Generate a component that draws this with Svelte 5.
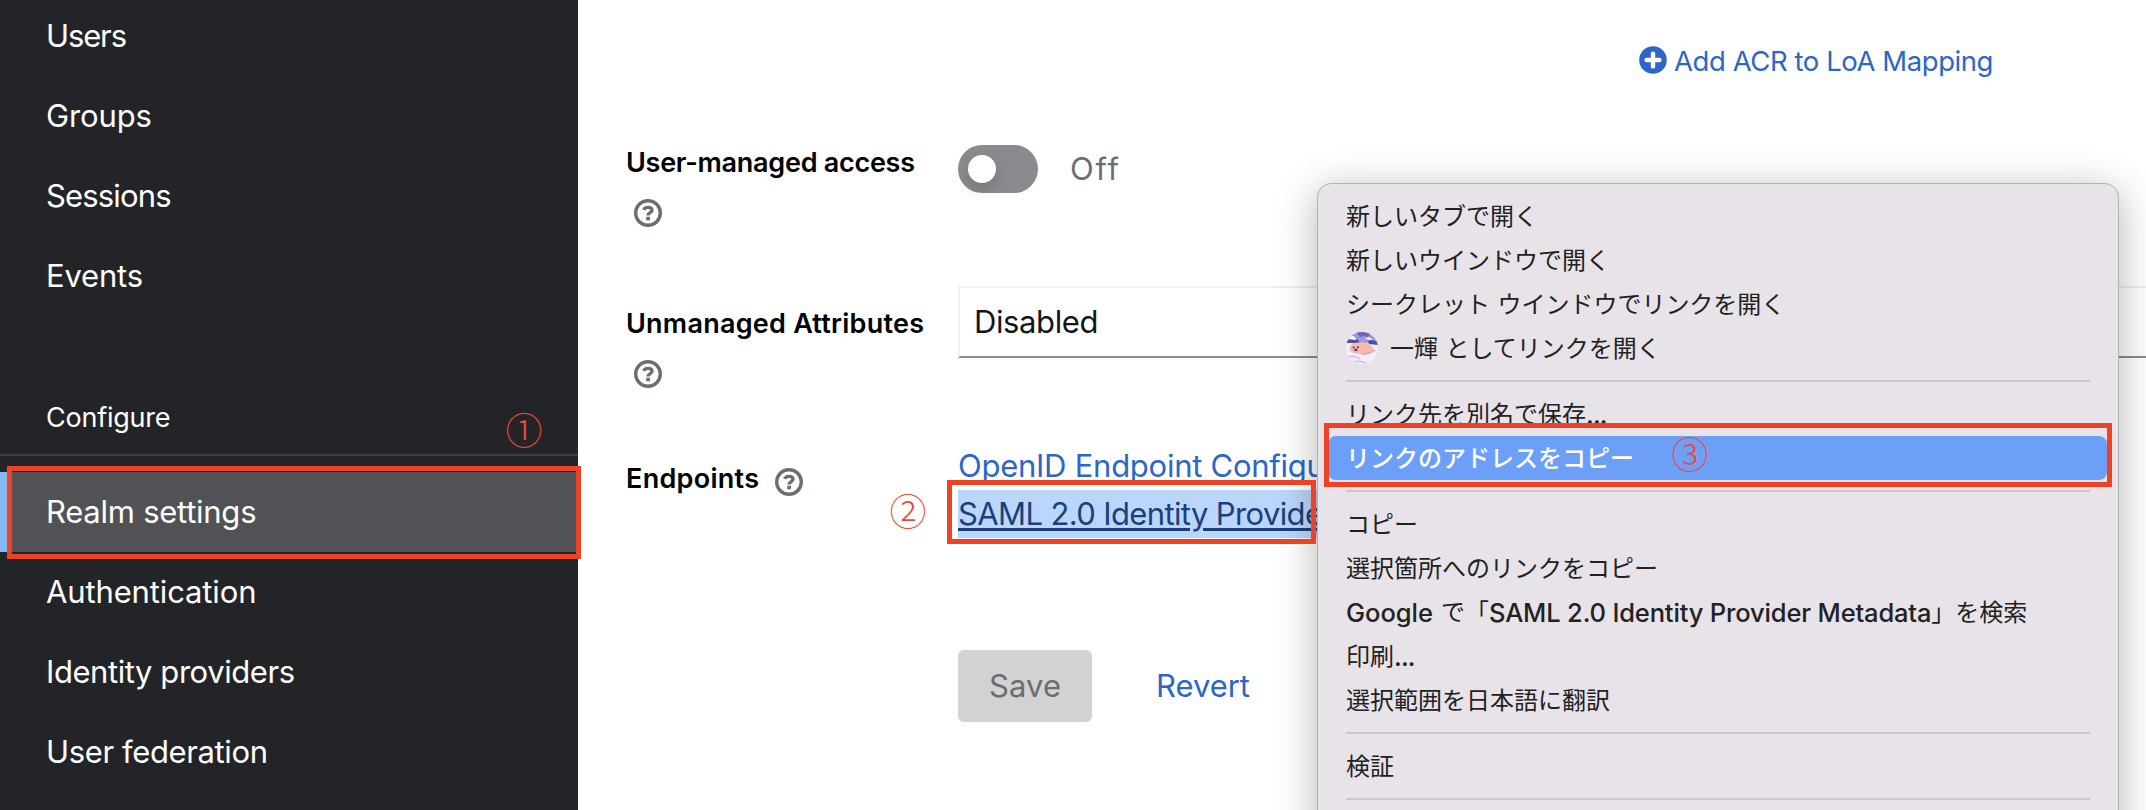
<script>
  const mainNav = [
    { label: 'Users', width: 81 },
    { label: 'Groups', width: 106 },
    { label: 'Sessions', width: 125.5 },
    { label: 'Events', width: 97 }
  ];
  const configNav = [
    { label: 'Realm settings', width: 210.5, active: true },
    { label: 'Authentication', width: 210.5 },
    { label: 'Identity providers', width: 249 },
    { label: 'User federation', width: 222 }
  ];
  const menu = [
    [
      { label: '新しいタブで開く' },
      { label: '新しいウインドウで開く' },
      { label: 'シークレット ウインドウでリンクを開く' },
      { label: '一輝 としてリンクを開く', avatar: true }
    ],
    [
      { label: 'リンク先を別名で保存', dots: true },
      { label: 'リンクのアドレスをコピー', selected: true }
    ],
    [
      { label: 'コピー' },
      { label: '選択箇所へのリンクをコピー' },
      { search: true },
      { label: '印刷', dots: true },
      { label: '選択範囲を日本語に翻訳' }
    ],
    [{ label: '検証' }]
  ];

  // Tracks a label so that its text spans the given width in pixels.
  function track(node, width) {
    const natural = node.getBoundingClientRect().width;
    const gaps = node.textContent.length - 1;
    node.style.letterSpacing = `${(width - natural) / gaps}px`;
  }
</script>

{#snippet help()}
  <svg class="help" viewBox="0 0 28 28" aria-hidden="true">
    <circle cx="14" cy="14" r="12.3" fill="none" stroke="currentColor" stroke-width="3.4" />
    <path d="M9.7 10.9C10.4 9.2 11.9 8.4 14 8.4c2.5 0 4 1.1 4 2.9 0 2.7-4 2.5-4 5.1" fill="none" stroke="currentColor" stroke-width="3.4" />
    <rect x="12.2" y="17.8" width="3.8" height="3.5" fill="currentColor" />
  </svg>
{/snippet}

<div class="page">
  <nav class="sidebar">
    {#each mainNav as item}
      <a class="nav-item"><span use:track={item.width}>{item.label}</span></a>
    {/each}
    <h2 class="nav-title"><span use:track={124.5}>Configure</span></h2>
    {#each configNav as item}
      <a class="nav-item" class:active={item.active}><span use:track={item.width}>{item.label}</span></a>
    {/each}
  </nav>

  <main>
    <div class="add">
      <svg viewBox="0 0 28 28" width="28" height="28" aria-hidden="true">
        <circle cx="14" cy="14" r="13.8" fill="#2b66c8" />
        <path d="M14 7.6v12.8M7.6 14h12.8" stroke="#fff" stroke-width="4.4" stroke-linecap="round" />
      </svg>
      <span use:track={319.5}>Add ACR to LoA Mapping</span>
    </div>

    <div class="field access">
      <div class="label"><span use:track={289}>User-managed access</span>{@render help()}</div>
      <div class="control">
        <span class="switch"><span class="knob"></span></span>
        <span class="off" use:track={49}>Off</span>
      </div>
    </div>

    <div class="field attributes">
      <div class="label"><span use:track={298}>Unmanaged Attributes</span>{@render help()}</div>
      <div class="select"><span use:track={124.5}>Disabled</span></div>
    </div>

    <div class="field endpoints">
      <div class="label"><span use:track={133}>Endpoints</span>{@render help()}</div>
      <div class="links">
        <a><span use:track={449}>OpenID Endpoint Configuration</span></a>
        <a class="picked"><span use:track={517}>SAML 2.0 Identity Provider Metadata</span></a>
      </div>
    </div>

    <div class="actions">
      <button class="save"><span use:track={72}>Save</span></button>
      <button class="revert"><span use:track={94}>Revert</span></button>
    </div>
  </main>

  <div class="menu">
    {#each menu as group}
      <div class="group">
        {#each group as item}
          <div class="row" class:selected={item.selected}>
            {#if item.avatar}
              <svg class="avatar" viewBox="0 0 32 32" aria-hidden="true">
                <defs>
                  <clipPath id="round"><circle cx="16" cy="16" r="16" /></clipPath>
                </defs>
                <g clip-path="url(#round)">
                  <rect width="32" height="32" fill="#f1edfb" />
                  <path d="M0 0h32v11H0z" fill="#9d95e0" />
                  <path d="M10 0l4 5 4-1 4 1 3-5z" fill="#6a66bd" />
                  <path d="M0 8l5-2 6 1 3 4H0zM22 9l4-1 6 2v3l-9-1z" fill="#4f4d9e" />
                  <path d="M1 7q4-5 8-2 2 2 1 3zM19 7q4-4 8 1z" fill="#fff" />
                  <path d="M4 18C3 13 7 10 13 10.5c6-1 12 1 14 6 3 1 3 4 1 4l-8 .5q-3 3-5 .8C9 21.800 5 21 4 18z" fill="#f4b9b0" />
                  <path d="M14 21.500q4 .6 8-1l4-1q-3 4-10 3z" fill="#e89b93" />
                  <circle cx="7.600" cy="15.400" r="0.900" fill="#3d2b35" />
                  <circle cx="12" cy="15.200" r="0.900" fill="#3d2b35" />
                  <path d="M8.400 16.800h3v2.200h-3z" fill="#5b3f48" />
                  <path d="M2 25q7-2 12 2M8 30q6-2 12 1" fill="none" stroke="#cdbff2" stroke-width="1.500" />
                </g>
              </svg>
            {/if}
            {#if item.search}
              <span class="latin google" use:track={87}>Google</span><span class="text">で「</span><span class="latin" use:track={442.5}>SAML 2.0 Identity Provider Metadata</span><span class="text">」を検索</span>
            {:else}
              <span class="text">{item.label}</span>{#if item.dots}<span class="latin dots">...</span>{/if}
            {/if}
          </div>
        {/each}
      </div>
    {/each}
    <div class="group"></div>
  </div>

  <div class="frame first"></div>
  <div class="frame second"></div>
  <div class="frame third"></div>
  <span class="mark m1">①</span>
  <span class="mark m2">②</span>
  <span class="mark m3">③</span>
</div>

<style>
  .page {
    position: relative;
    display: flex;
    width: 2146px;
    height: 810px;
    overflow: hidden;
    background: #fff;
    font-family: Inter, "Noto Sans CJK JP", sans-serif;
    font-size: 31px;
    white-space: nowrap;
  }
  .sidebar {
    flex: none;
    width: 578px;
    height: 814px;
    margin-top: -4px;
    background: #232428;
    color: #fff;
  }
  .nav-item {
    display: flex;
    align-items: center;
    height: 80px;
    box-sizing: border-box;
    padding: 0 0 2px 46px;
  }
  .nav-item.active {
    padding-left: 38px;
    border-left: 8px solid #86b9f2;
    background: #515256;
  }
  .nav-title {
    display: flex;
    align-items: center;
    height: 62px;
    margin: 0 0 16px;
    padding: 70px 0 6px 46px;
    border-bottom: 2px solid #3c3f42;
    font-size: 27px;
    font-weight: 400;
  }
  main {
    flex: 1;
    min-width: 0;
    padding-left: 48px;
    color: #151515;
  }
  .add {
    display: flex;
    align-items: center;
    gap: 7px;
    height: 120px;
    padding-left: 1013px;
    color: #2b66c8;
    font-size: 27.5px;
  }
  .add span {
    padding-top: 2px;
  }
  .field {
    display: grid;
    grid-template-columns: 332px 1300px;
  }
  .label {
    color: #000;
    font-size: 27px;
    font-weight: 600;
    line-height: 42px;
  }
  .label span {
    display: inline-block;
  }
  .help {
    display: block;
    width: 28px;
    height: 28px;
    margin: 15px 0 0 8px;
    color: #6a6e73;
  }
  .access {
    height: 166px;
  }
  .access .label {
    padding-top: 22px;
  }
  .control {
    display: flex;
    align-items: center;
    gap: 32px;
    height: 48px;
    padding-top: 25px;
    color: #6a6e73;
  }
  .off {
    padding-bottom: 2px;
  }
  .switch {
    display: flex;
    align-items: center;
    box-sizing: border-box;
    width: 80px;
    height: 48px;
    padding-left: 10px;
    border-radius: 24px;
    background: #8a8b8f;
  }
  .knob {
    width: 28px;
    height: 28px;
    border-radius: 50%;
    background: #fff;
    box-shadow: 0 6px 14px rgba(0, 0, 0, 0.16);
  }
  .attributes {
    height: 156px;
  }
  .attributes .label {
    padding-top: 17px;
  }
  .select {
    display: flex;
    align-items: center;
    box-sizing: border-box;
    height: 72px;
    padding: 0 0 2px 14px;
    border: 2px solid #f0f0f0;
    border-bottom-color: #8a8d90;
  }
  .endpoints {
    height: 208px;
  }
  .endpoints .label {
    display: flex;
    align-items: flex-start;
    gap: 16px;
    padding-top: 16px;
  }
  .endpoints .help {
    margin: 10px 0 0;
  }
  .links {
    display: flex;
    flex-direction: column;
    align-items: flex-start;
    color: #2b66c8;
    line-height: 48px;
  }
  .picked {
    background: #bbd6fb;
    color: #1b3f7c;
    text-decoration: underline;
    text-decoration-thickness: 3px;
    text-underline-offset: 3px;
  }
  .actions {
    display: flex;
    gap: 33px;
    padding-left: 332px;
  }
  button {
    height: 72px;
    padding: 0 31px 2px;
    border: 0;
    border-radius: 6px;
    background: none;
    color: #2b66c8;
    font: inherit;
  }
  .save {
    width: 134px;
    background: #d2d2d2;
    color: #6a6e73;
  }
  .menu {
    position: absolute;
    left: 1317px;
    top: 183px;
    box-sizing: border-box;
    width: 802px;
    height: 700px;
    padding: 10px 11px 0 10px;
    border: 1px solid #b5b2b6;
    border-radius: 14px;
    background: #e7e3e8;
    box-shadow: 0 8px 40px rgba(0, 0, 0, 0.3);
    color: #222124;
    font-family: "Noto Sans CJK JP", sans-serif;
    font-size: 24px;
    word-spacing: 2px;
  }
  .group + .group::before {
    content: "";
    display: block;
    height: 2px;
    margin: 10px 17px 10px 18px;
    background: #cbc7cc;
  }
  .row {
    display: flex;
    align-items: center;
    height: 44px;
    padding-left: 18px;
    border-radius: 8px;
  }
  .text {
    padding-bottom: 3px;
  }
  .row.selected {
    background: #6c9ff8;
    color: #fff;
    font-weight: 500;
  }
  .avatar {
    width: 32px;
    height: 32px;
    margin-right: 12px;
  }
  .latin {
    font-family: Inter, sans-serif;
    font-size: 25.5px;
    font-weight: 450;
    word-spacing: 0;
  }
  .google {
    margin-right: 8px;
  }
  .dots {
    letter-spacing: -0.8px;
  }
  .frame {
    position: absolute;
    box-sizing: border-box;
    border: 5px solid #ee4227;
  }
  .first {
    left: 7px;
    top: 466px;
    width: 574px;
    height: 93px;
  }
  .second {
    left: 947px;
    top: 480px;
    width: 369px;
    height: 64px;
  }
  .third {
    left: 1324px;
    top: 423px;
    width: 788px;
    height: 64px;
  }
  .mark {
    position: absolute;
    color: #ee4b36;
    font-family: "Noto Sans CJK JP", sans-serif;
    font-size: 37px;
    font-weight: 300;
    line-height: 40px;
  }
  .m1 {
    left: 505.5px;
    top: 409px;
  }
  .m2 {
    left: 889.5px;
    top: 490px;
  }
  .m3 {
    left: 1671.5px;
    top: 433px;
  }
</style>
